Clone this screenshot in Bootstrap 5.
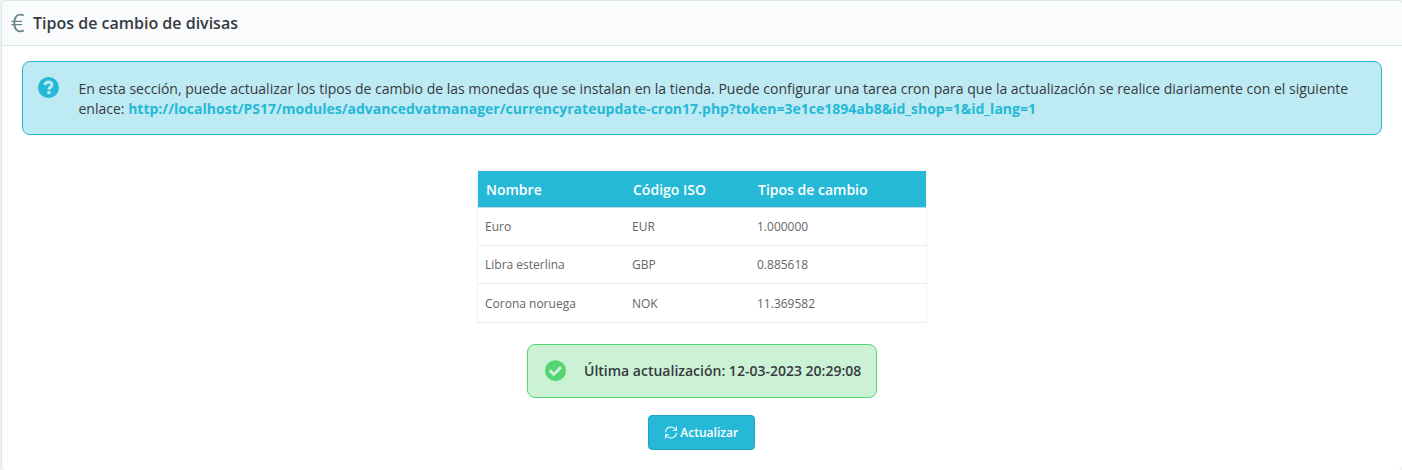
<!DOCTYPE html>
<html lang="es">
<head>
<meta charset="utf-8">
<meta name="viewport" content="width=device-width, initial-scale=1">
<title>Tipos de cambio de divisas</title>
<link href="https://cdn.jsdelivr.net/npm/bootstrap@5.3.0/dist/css/bootstrap.min.css" rel="stylesheet">
<style>
  body { font-family: "Open Sans", sans-serif; font-size: 14px; line-height: 20px; color: #363a41; background: #eff1f2; overflow: hidden; }
  .panel-rates { --bs-card-border-color: #dbe6e9; --bs-card-border-radius: 5px; --bs-card-inner-border-radius: 4px; --bs-card-cap-bg: #fafbfc; height: 470px; margin: 0 -1px 0 1px; color: #363a41; border-bottom-color: #fff; }
  .panel-rates .card-header { height: 45px; padding: 0 0 0 9px; gap: 8px; font-size: 16px; font-weight: 600; }
  .panel-rates .card-body { padding: 15px 20px 0; }
  .alert-info { --bs-alert-bg: #beeaf3; --bs-alert-border-color: #25b9d7; --bs-alert-color: #363a41; }
  .alert-success { --bs-alert-bg: #cbf2d4; --bs-alert-border-color: #53d572; --bs-alert-color: #363a41; }
  .alert { border-radius: 8px; }
  .notice { width: 1360px; height: 74px; padding: 15px 20px 0 15px; gap: 18.5px; }
  .notice p { padding-top: 2px; }
  .notice a { color: #25b9d7; font-weight: 700; }
  .rates { --bs-table-bg: #fff; --bs-table-color: #666; width: 450px; table-layout: fixed; border: 1px solid #f2f2f2; border-bottom: 0; font-size: 12px; margin: 35px auto 21px; }
  .rates th { --bs-table-bg: #25b9d7; --bs-table-color: #fff; height: 37px; padding: 2px 8px 0; vertical-align: middle; font-size: 14px; font-weight: 600; color: #fff; border-bottom: 1px solid #bbdff0; }
  .rates td { height: 38px; padding: 0 7px; color: #666; border-bottom: 1px solid #eaebec; }
  .rates tr:last-child td { height: 39px; padding-top: 1px; }
  .rates thead tr:last-child th { height: 37px; }
  .updated { width: 350px; height: 54px; padding: 0 0 0 17px; gap: 18px; font-weight: 600; margin: 0 auto 17px; }
  .btn-refresh { --bs-btn-color: #fff; --bs-btn-bg: #25b9d7; --bs-btn-border-color: #21a6c1; --bs-btn-border-radius: 4px; --bs-btn-hover-color: #fff; --bs-btn-hover-bg: #21a6c1; width: 107px; height: 35px; padding: 0; gap: 3.5px; font-size: 12px; font-weight: 600; }
  .actions { padding-right: 1px; }
</style>
</head>
<body>
<main class="card panel-rates">
  <div class="card-header d-flex align-items-center">
    <svg width="14" height="20" viewBox="0 0 14 20" fill="none" stroke="#6c868e" stroke-width="1.9"><path d="M12.8 2.3C6.7 0 3.3 3.6 3.3 10s3.4 10 9.5 7.7"/><path stroke-width="1.4" d="M.3 8.4h10.8M.3 11.6h10.8"/></svg>
    <span>Tipos de cambio de divisas</span>
  </div>
  <div class="card-body">
    <div class="alert alert-info notice d-flex mb-0">
      <svg class="flex-shrink-0" width="22" height="22" viewBox="0 0 22 22"><circle cx="10.5" cy="10.5" r="10.5" fill="#25b9d7"/><path d="M6.8 7.9C8.3 3.9 14.2 4.4 13.9 8.1c0 2.2-3 2.2-3 4.6" fill="none" stroke="#beeaf3" stroke-width="3"/><path d="M9.3 14.1h3.2v3H9.3z" fill="#beeaf3"/></svg>
      <p class="mb-0">En esta sección, puede actualizar los tipos de cambio de las monedas que se instalan en la tienda. Puede configurar una tarea cron para que la actualización se realice diariamente con el siguiente enlace: <a class="text-decoration-none" href="#">http://localhost/PS17/modules/advancedvatmanager/currencyrateupdate-cron17.php?token=3e1ce1894ab8&amp;id_shop=1&amp;id_lang=1</a></p>
    </div>
    <table class="table rates align-middle">
      <colgroup><col style="width:147.5px"><col style="width:125px"><col></colgroup>
      <thead><tr><th>Nombre</th><th>Código ISO</th><th>Tipos de cambio</th></tr></thead>
      <tbody>
        <tr><td>Euro</td><td>EUR</td><td>1.000000</td></tr>
        <tr><td>Libra esterlina</td><td>GBP</td><td>0.885618</td></tr>
        <tr><td>Corona noruega</td><td>NOK</td><td>11.369582</td></tr>
      </tbody>
    </table>
    <div class="alert alert-success updated d-flex align-items-center">
      <svg width="21" height="22" viewBox="0 0 21 22"><circle cx="10.5" cy="10.7" r="10.5" fill="#53d572"/><path d="m4.8 10.4 4 4 7.3-7.3" fill="none" stroke="#cbf2d4" stroke-width="3"/></svg>
      <span>Última actualización: 12-03-2023 20:29:08</span>
    </div>
    <div class="actions d-flex justify-content-center">
      <button type="button" class="btn btn-refresh d-flex align-items-center justify-content-center">
        <svg width="12" height="13" viewBox="0 0 12 13" fill="none" stroke="#fff" stroke-width="1.1"><path d="M.6 6.2C.7 1.2 7.4-.9 10.9 3.5M11.5.5v3.7H7.8M11.4 6.8c-.1 5-6.8 7.1-10.3 2.7M.5 12.5V8.8h3.7"/></svg>
        <span>Actualizar</span>
      </button>
    </div>
  </div>
</main>
<script src="https://cdn.jsdelivr.net/npm/bootstrap@5.3.0/dist/js/bootstrap.bundle.min.js"></script>
</body>
</html>
